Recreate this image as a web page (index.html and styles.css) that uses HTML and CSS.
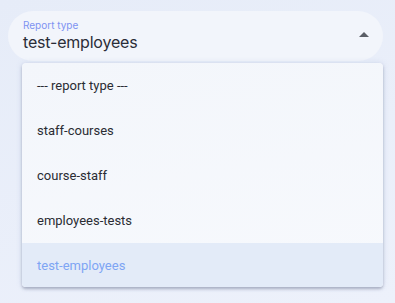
FILE: index.html
```html
<!DOCTYPE html>
<html lang="en">
<head>
	<meta charset="UTF-8">
	<meta name="viewport" content="width=device-width, initial-scale=1.0">
	<title>Report type</title>
	<link rel="stylesheet" href="styles.css">
</head>
<body>
	<div class="select">
		<div class="field">
			<div class="value">
				<label>Report type</label>
				<div class="current">test-employees</div>
			</div>
			<span class="arrow"></span>
		</div>
		<ul class="menu">
			<li>--- report type ---</li>
			<li>staff-courses</li>
			<li>course-staff</li>
			<li>employees-tests</li>
			<li class="selected">test-employees</li>
		</ul>
	</div>
</body>
</html>
```
FILE: styles.css
```css
html, body { margin: 0; padding: 0; }
body {
	background: linear-gradient(160deg, #e6ecf8 0%, #edf1fb 100%);
	height: 303px;
	font-family: Inter, "Noto Sans", sans-serif;
}

.select {
	padding: 11px 12px 0 8px;
	display: flex;
	flex-direction: column;
}

.field {
	height: 50px;
	box-sizing: border-box;
	border-radius: 25px;
	background: #f2f5fb;
	display: flex;
	align-items: center;
	padding: 0 14px 0 15px;
}
.field .value {
	flex: 1;
	display: flex;
	flex-direction: column;
}
.field label {
	font-size: 10px;
	color: #7e93f2;
	line-height: 13px;
	margin-top: -1px;
}
.field .current {
	font-size: 16px;
	color: #2a2d38;
	line-height: 20px;
	letter-spacing: -0.2px;
}
.arrow {
	width: 0;
	height: 0;
	border-left: 5px solid transparent;
	border-right: 5px solid transparent;
	border-bottom: 5px solid #5a5e66;
	margin-top: -3px;
}

.menu {
	list-style: none;
	margin: 2px 0 0 14px;
	padding: 0;
	background: linear-gradient(170deg, #f3f6fb 0%, #f7f9fd 100%);
	border-radius: 4px;
	box-shadow: 0 2px 3px rgba(60, 70, 100, 0.35), 0 0 6px rgba(120, 140, 190, 0.2);
	overflow: hidden;
	font-family: Roboto, "Liberation Sans", sans-serif;
	font-size: 13px;
}
.menu li {
	height: 45px;
	line-height: 46px;
	padding: 0 15px;
	color: #2a2c33;
}
.menu li.selected {
	height: 44px;
	line-height: 45px;
	background: #e3ebf8;
	color: #7ea5f4;
}
```
